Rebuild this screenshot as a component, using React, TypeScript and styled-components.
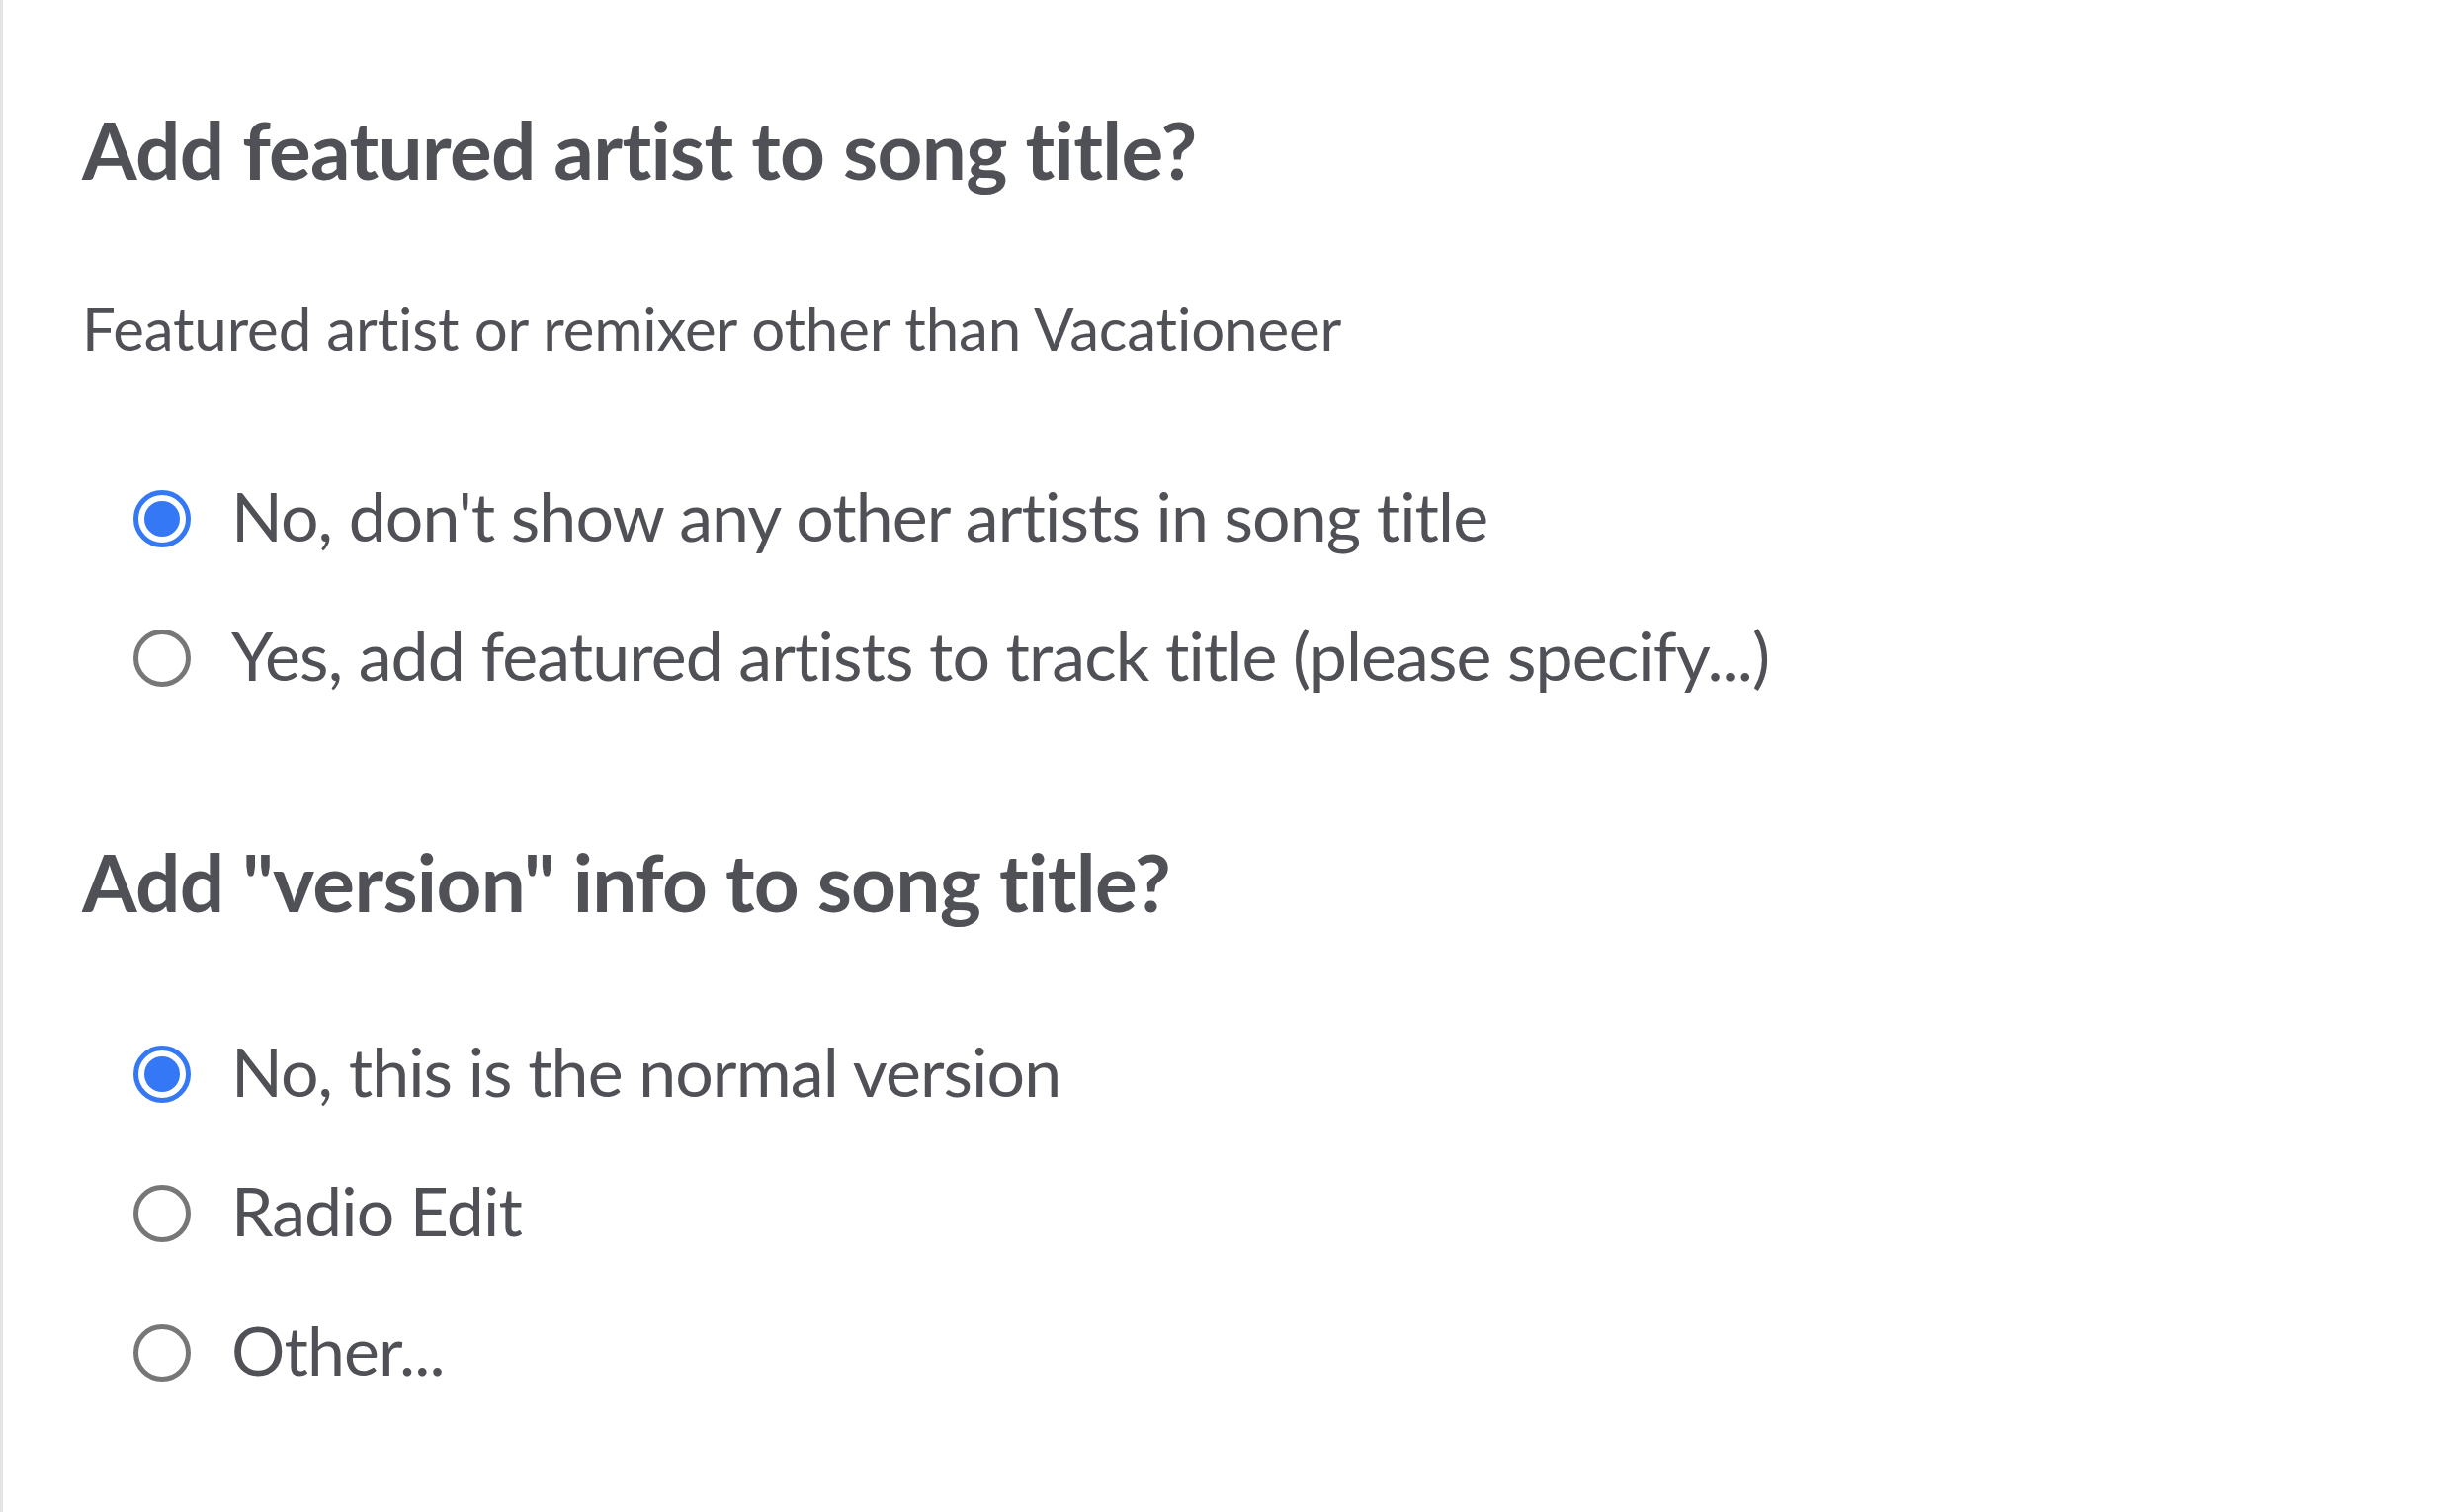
import React, { useState } from "react";
import styled, { createGlobalStyle } from "styled-components";

const COLORS = {
  text: "#505157",
  blue: "#3478f6",
  grey: "#777777",
  border: "#e4e4e4",
  white: "#ffffff",
};

const GlobalStyle = createGlobalStyle`
  html, body {
    margin: 0;
    padding: 0;
    background: ${COLORS.white};
  }
  body {
    font-family: Lato, "Open Sans", sans-serif;
    color: ${COLORS.text};
  }
`;

const Page = styled.div`
  min-height: 1530px;
  box-sizing: border-box;
  border-left: 3px solid ${COLORS.border};
  padding: 103px 0 0 80px;
`;

const Section = styled.section<{ $gap?: number }>`
  display: flex;
  flex-direction: column;
  margin-top: ${(p) => p.$gap ?? 0}px;
`;

const Heading = styled.h2`
  margin: 0;
  font-size: 80px;
  line-height: 96px;
  font-weight: 700;
  letter-spacing: -0.7px;
`;

const Hint = styled.p`
  margin: 97px 0 0;
  font-size: 60px;
  line-height: 72px;
  font-weight: 400;
  letter-spacing: -0.15px;
`;

const Options = styled.div<{ $top: number }>`
  display: flex;
  flex-direction: column;
  gap: 59px;
  margin-top: ${(p) => p.$top}px;
  padding-left: 52px;
`;

const Option = styled.label`
  display: flex;
  align-items: center;
  gap: 41px;
  font-size: 68px;
  line-height: 82px;
  letter-spacing: -0.9px;
  cursor: pointer;
`;

const HiddenInput = styled.input`
  position: absolute;
  opacity: 0;
  pointer-events: none;
`;

const Circle = styled.span<{ $checked: boolean }>`
  flex: none;
  width: 58px;
  height: 58px;
  box-sizing: border-box;
  margin-top: 6px;
  border-radius: 50%;
  border: 5px solid ${(p) => (p.$checked ? COLORS.blue : COLORS.grey)};
  display: flex;
  align-items: center;
  justify-content: center;
  &::after {
    content: "";
    width: 36px;
    height: 36px;
    border-radius: 50%;
    background: ${COLORS.blue};
    display: ${(p) => (p.$checked ? "block" : "none")};
  }
`;

function RadioGroup({
  name,
  options,
  top,
}: {
  name: string;
  options: string[];
  top: number;
}) {
  const [value, setValue] = useState(options[0]);
  return (
    <Options $top={top}>
      {options.map((o) => (
        <Option key={o}>
          <HiddenInput
            type="radio"
            name={name}
            checked={value === o}
            onChange={() => setValue(o)}
          />
          <Circle $checked={value === o} />
          <span>{o}</span>
        </Option>
      ))}
    </Options>
  );
}

export default function App() {
  return (
    <>
      <GlobalStyle />
      <Page>
        <Section>
          <Heading>Add featured artist to song title?</Heading>
          <Hint>Featured artist or remixer other than Vacationeer</Hint>
          <RadioGroup
            name="featured"
            top={113}
            options={[
              "No, don't show any other artists in song title",
              "Yes, add featured artists to track title (please specify...)",
            ]}
          />
        </Section>
        <Section $gap={140}>
          <Heading>Add "version" info to song title?</Heading>
          <RadioGroup
            name="version"
            top={103}
            options={["No, this is the normal version", "Radio Edit", "Other..."]}
          />
        </Section>
      </Page>
    </>
  );
}
